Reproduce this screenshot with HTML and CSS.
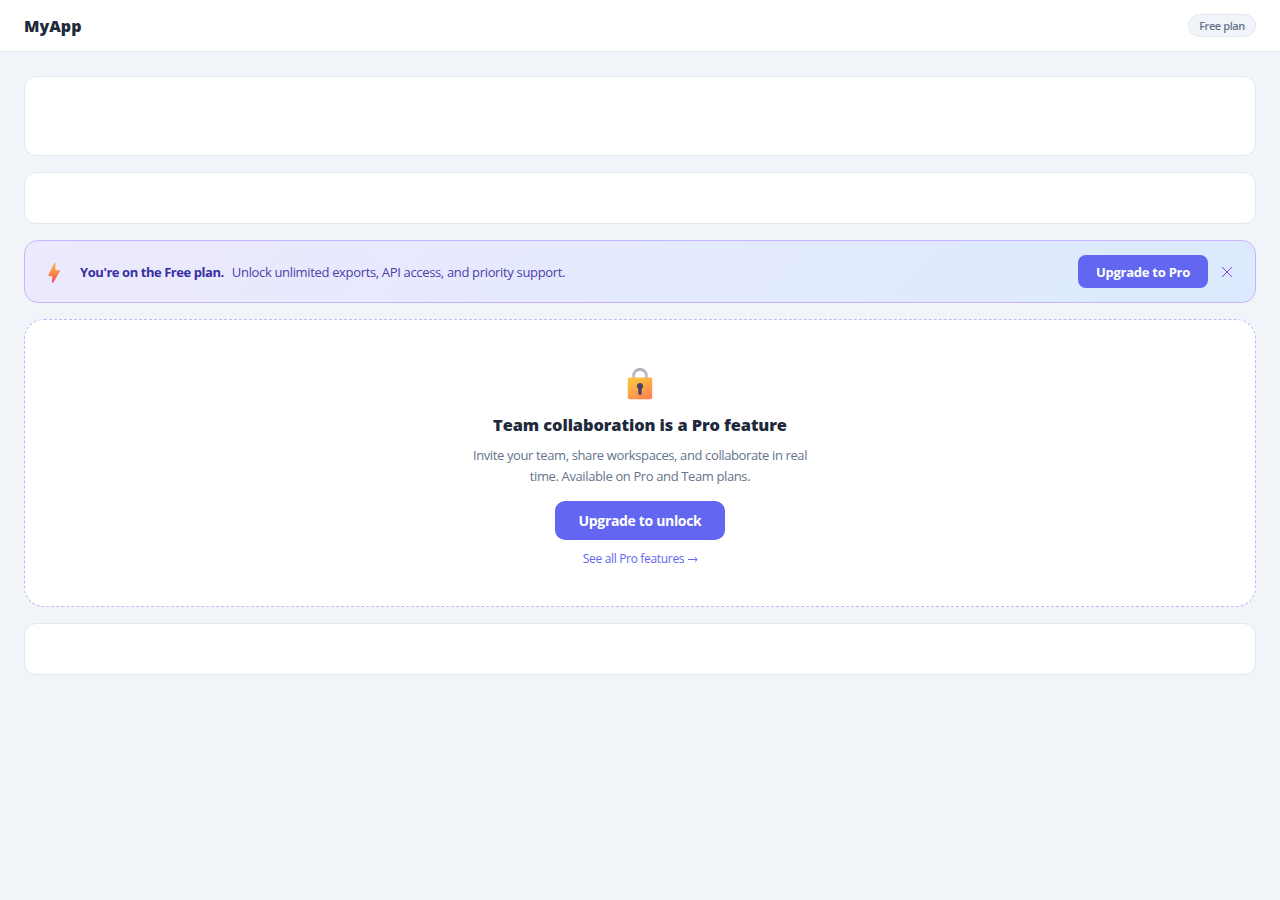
FILE: index.html
```html
<!DOCTYPE html>
<html lang="en">
<head>
<meta charset="utf-8">
<title>MyApp</title>
<link rel="stylesheet" href="styles.css">
</head>
<body>
<header class="topbar">
  <div class="brand">MyApp</div>
  <span class="plan-badge">Free plan</span>
</header>
<main class="content">
  <div class="card card-tall"></div>
  <div class="card"></div>
  <section class="banner">
    <svg class="bolt" viewBox="0 0 28 24" aria-hidden="true">
      <defs><linearGradient id="boltFill" x1="0" y1="0" x2="0" y2="1"><stop offset="0" stop-color="#fdb13a"/><stop offset=".5" stop-color="#fb8b46"/><stop offset="1" stop-color="#f0485a"/></linearGradient></defs>
      <path d="M13.4 2 L14.5 2.1 L14.3 9.2 L18.7 9.3 L19 10.3 L12.3 21.6 L10.8 21.7 L11.4 15.2 L7.6 15.1 L7.3 14 Z" fill="url(#boltFill)"/>
    </svg>
    <p class="banner-text"><strong>You're on the Free plan.</strong><span>Unlock unlimited exports, API access, and priority support.</span></p>
    <button class="btn btn-small"><span>Upgrade to Pro</span></button>
    <button class="close" aria-label="Dismiss"><svg viewBox="0 0 12 12"><path d="M1.2 1.2 10.8 10.8M10.8 1.2 1.2 10.8"/></svg></button>
  </section>
  <section class="locked">
    <svg class="lock" viewBox="0 0 26 32" aria-hidden="true">
      <defs>
        <linearGradient id="lockBody" x1="0" y1="0" x2=".55" y2="1"><stop offset="0" stop-color="#ffc83d"/><stop offset=".45" stop-color="#fdb144"/><stop offset="1" stop-color="#fc8850"/></linearGradient>
        <linearGradient id="shackle" x1="0" y1="0" x2="0" y2="1"><stop offset="0" stop-color="#b5b1bd"/><stop offset="1" stop-color="#c9c5d0"/></linearGradient>
      </defs>
      <path d="M6.6 12V7.8a6.4 6.4 0 0 1 12.8 0V12" fill="none" stroke="url(#shackle)" stroke-width="3"/>
      <rect x=".8" y="9.6" width="24.4" height="21.6" rx="1.6" fill="url(#lockBody)"/>
      <path d="M13 15a3.2 3.2 0 0 0-1.7 5.9v4.3a1.7 1.7 0 0 0 3.4 0v-4.3A3.2 3.2 0 0 0 13 15Z" fill="#4b4068"/>
    </svg>
    <h2 class="locked-title">Team collaboration is a Pro feature</h2>
    <p class="locked-text">Invite your team, share workspaces, and collaborate in real<br>time. Available on Pro and Team plans.</p>
    <button class="btn btn-large"><span>Upgrade to unlock</span></button>
    <a class="features"><span>See all Pro features</span><svg viewBox="0 0 11 8" aria-hidden="true"><path d="M0 4.5h9M6.8 2.2 9.2 4.5 6.8 6.8"/></svg></a>
  </section>
  <div class="card"></div>
</main>
</body>
</html>
```
FILE: styles.css
```css
* { box-sizing: border-box; margin: 0; padding: 0; }
body { min-height: 900px; background: #f1f5f9; color: #1e293b; font-family: "Open Sans", "Noto Sans", sans-serif; }
button { font: inherit; border: 0; background: none; }
.topbar { height: 52px; padding: 0 24px; display: flex; align-items: center; justify-content: space-between; background: #fff; border-bottom: 1px solid #e2e8f0; }
.brand { font-size: 16px; font-weight: 800; line-height: 22px; }
.plan-badge { width: 68px; height: 23px; line-height: 22px; text-align: center; font-size: 11px; font-weight: 600; letter-spacing: -0.42px; color: #64748b; background: #f1f5f9; border: 1px solid #e2e8f0; border-radius: 12px; }
.content { padding: 24px; display: flex; flex-direction: column; gap: 16px; }
.card { height: 52px; background: #fff; border: 1px solid #e2e8f0; border-radius: 12px; }
.card-tall { height: 80px; }
.banner { height: 63px; padding: 0 21px 0 16px; display: flex; align-items: center; background: linear-gradient(135deg, #ede9fe, #dbeafe); border: 1px solid #c4b5fd; border-radius: 14px; }
.bolt { width: 28px; height: 24px; margin: 2px 11px 0 0; }
.banner-text { flex: 1; display: flex; gap: 8px; font-size: 13px; line-height: 20px; letter-spacing: -0.34px; color: #4c3fa8; white-space: nowrap; }
.banner-text strong { font-weight: 700; letter-spacing: -0.44px; color: #3730a3; }
.btn { color: #fff; background: #6366f1; font-weight: 700; text-align: center; white-space: nowrap; }
.btn-small { width: 130px; height: 33px; border-radius: 8px; font-size: 13px; letter-spacing: -0.25px; }
.close { width: 15px; height: 20px; margin-left: 11px; display: flex; align-items: center; justify-content: center; }
.close svg { width: 12px; height: 12px; fill: none; stroke: #7c3aed; stroke-width: 1; }
.locked { height: 288px; padding-top: 48px; display: flex; flex-direction: column; align-items: center; background: #fff; border: 1px dashed #c4b5fd; border-radius: 20px; }
.lock { width: 26px; height: 32px; }
.locked-title { margin-top: 14px; font-size: 16.4px; line-height: 21px; height: 24px; font-weight: 800; letter-spacing: -0.09px; white-space: nowrap; }
.locked-text { margin-top: 7px; font-size: 13px; line-height: 21px; letter-spacing: -0.38px; color: #64748b; text-align: center; white-space: nowrap; }
.btn-large { width: 170px; height: 39px; margin-top: 14px; border-radius: 10px; font-size: 14px; letter-spacing: -0.34px; }
.features { margin-top: 10px; padding-left: 2px; display: flex; align-items: center; gap: 4px; font-size: 12px; line-height: 18px; letter-spacing: -0.32px; color: #6366f1; }
.features svg { width: 11px; height: 8px; fill: none; stroke: #6366f1; stroke-width: 1; }
```
